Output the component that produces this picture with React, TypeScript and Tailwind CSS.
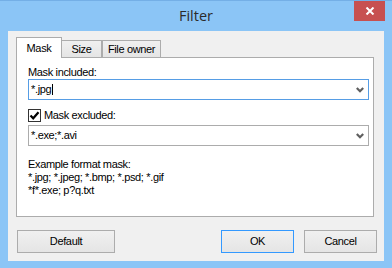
import React from "react";

const font = { fontFamily: '"Liberation Sans", Arial, sans-serif' };

function Chevron() {
  return (
    <svg width="8" height="6" viewBox="0 0 8 6" className="shrink-0">
      <path d="M0.8 1 L4 4.2 L7.2 1" fill="none" stroke="#5f5f5f" strokeWidth="2.2" />
    </svg>
  );
}

function Combo({ focused, value, cursor }: { focused?: boolean; value: string; cursor?: boolean }) {
  return (
    <div
      className={`flex items-center h-[21px] w-[341px] bg-white border pl-[2px] pr-[4px] ${
        focused ? "border-[#569de5]" : "border-[#acacac]"
      }`}
    >
      <div className="flex-1 flex items-center text-[11px] leading-[13px] text-black">
        <span>{value}</span>
        {cursor && <span className="w-px h-[11px] bg-black ml-[1px]" />}
      </div>
      <Chevron />
    </div>
  );
}

function Btn({ label, w, def }: { label: string; w: string; def?: boolean }) {
  return (
    <div
      className={`${w} h-[23px] flex items-center justify-center text-[11px] text-black border bg-gradient-to-b from-[#f0f0f0] to-[#e5e5e5] ${
        def ? "border-[#3399ff]" : "border-[#acacac]"
      }`}
    >
      {label}
    </div>
  );
}

export default function App() {
  return (
    <div
      className="w-[392px] h-[268px] bg-[#8bc5f6] flex flex-col border-t border-[#74afe6] tracking-[-0.35px]"
      style={font}
    >
      <div className="relative h-[30px] flex items-start justify-center tracking-normal">
        <div
          className="mt-[5px] text-[14.5px] leading-[20px] text-[#2b2b2b]"
          style={{ fontFamily: '"Open Sans", "Noto Sans", sans-serif' }}
        >
          Filter
        </div>
        <div className="absolute right-[7px] top-0 w-[31px] h-[20px] bg-[#c75050] flex items-center justify-center">
          <svg width="10" height="8" viewBox="0 0 10 8">
            <path d="M1.5 0.5 L8.5 7.5 M8.5 0.5 L1.5 7.5" stroke="#fff" strokeWidth="2" />
          </svg>
        </div>
      </div>
      <div className="mx-[8px] h-[230px] bg-[#f0f0f0] flex flex-col pt-[6px] pl-[8px] pr-[10px]">
        <div className="flex items-end h-[20px]">
          <div className="relative z-10 w-[46px] h-[21px] -mb-px bg-white border border-b-0 border-[#acacac] flex items-start justify-center pt-[4px] text-[11px] leading-[13px] text-black">
            Mask
          </div>
          <div className="w-[41px] h-[17px] -ml-px border border-b-0 border-[#acacac] bg-gradient-to-b from-[#f0f0f0] to-[#e5e5e5] flex items-start justify-center pt-[2px] text-[11px] leading-[13px] text-black">
            Size
          </div>
          <div className="w-[59px] h-[17px] border border-b-0 border-[#acacac] bg-gradient-to-b from-[#f0f0f0] to-[#e5e5e5] flex items-start justify-center pt-[2px] text-[11px] leading-[13px] text-black">
            File owner
          </div>
        </div>
        <div className="h-[160px] bg-white border border-[#acacac] pt-[8px] pl-[11px] flex flex-col text-[11px] leading-[13px] text-black">
          <div>Mask included:</div>
          <Combo focused value="*.jpg" cursor />
          <div className="flex items-center h-[14px] mt-[8px]">
            <div className="w-[13px] h-[13px] border border-[#333] bg-white flex items-center justify-center">
              <svg width="11" height="11" viewBox="0 0 11 11">
                <path d="M1.5 5.5 L4.2 8.3 L9.5 2.2" fill="none" stroke="#000" strokeWidth="2.2" />
              </svg>
            </div>
            <span className="ml-[3px]">Mask excluded:</span>
          </div>
          <div className="mt-[3px]">
            <Combo value="*.exe;*.avi" />
          </div>
          <div className="mt-[12px]">Example format mask:</div>
          <div>*.jpg; *.jpeg; *.bmp; *.psd; *.gif</div>
          <div>*f*.exe; p?q.txt</div>
        </div>
        <div className="flex mt-[13px]">
          <div className="ml-[1px]">
            <Btn label="Default" w="w-[98px]" />
          </div>
          <div className="flex-1" />
          <div className="flex gap-[10px] -mr-[3px]">
            <Btn label="OK" w="w-[73px]" def />
            <Btn label="Cancel" w="w-[73px]" />
          </div>
        </div>
      </div>
    </div>
  );
}
